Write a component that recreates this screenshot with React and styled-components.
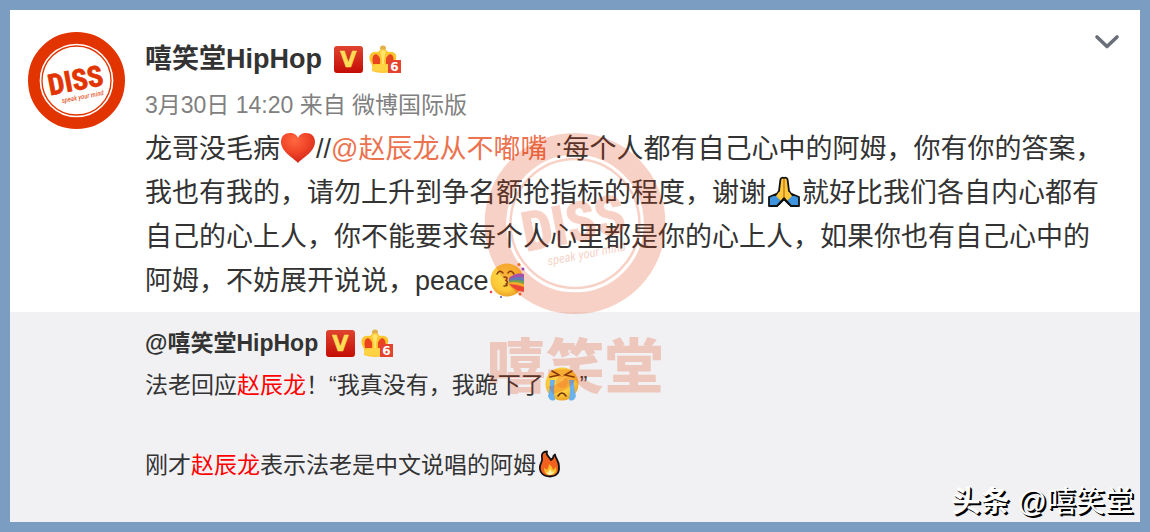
import styled, { createGlobalStyle } from "styled-components";

const COLOR = {
  FRAME: "#7b9dc2",
  CARD: "#ffffff",
  QUOTE: "#f1f1f3",
  TEXT: "#333333",
  SUB: "#808080",
  LINK: "#eb7350",
  HIGHLIGHT: "#ff0000",
  LOGO: "#e23400",
};

const App = () => {
  return (
    <>
      <GlobalStyle />
      <Card>
        <Post>
          <AvatarLink href="#profile" aria-label="嘻笑堂HipHop">
            <DissLogo filled />
          </AvatarLink>
          <Content>
            <PostHead>
              <Author href="#profile">嘻笑堂HipHop</Author>
              <VBadge />
              <CrownBadge />
            </PostHead>
            <Meta>
              <time>3月30日 14:20</time> 来自 微博国际版
            </Meta>
            <Body>
              龙哥没毛病
              <Heart />
              //<Mention href="#mention">@赵辰龙从不嘟嘴</Mention>{" "}
              :每个人都有自己心中的阿姆，你有你的答案，我也有我的，请勿上升到争名额抢指标的程度，谢谢
              <Pray />
              就好比我们各自内心都有自己的心上人，你不能要求每个人心里都是你的心上人，如果你也有自己心中的阿姆，不妨展开说说，peace
              <Rainbow />
            </Body>
          </Content>
          <MenuBtn aria-label="menu">
            <svg width="26" height="16" viewBox="0 0 26 16">
              <path
                d="M3 3 L13 12.5 L23 3"
                fill="none"
                stroke="#696e78"
                strokeWidth="3.6"
                strokeLinecap="round"
                strokeLinejoin="round"
              />
            </svg>
          </MenuBtn>
        </Post>
        <Quote>
          <QuoteHead>
            <Author href="#profile" $small>
              @嘻笑堂HipHop
            </Author>
            <VBadge />
            <CrownBadge />
          </QuoteHead>
          <QuoteText>
            法老回应<Mark>赵辰龙</Mark>！“我真没有，我跪下了
            <Cry />”
          </QuoteText>
          <QuoteText $gap>
            刚才<Mark>赵辰龙</Mark>表示法老是中文说唱的阿姆
            <Fire />
          </QuoteText>
        </Quote>
        <Watermark>
          <DissLogo />
          <WatermarkName>嘻笑堂</WatermarkName>
        </Watermark>
        <Source>
          <b>头条</b> @嘻笑堂
        </Source>
      </Card>
    </>
  );
};

const DissLogo = ({ filled }) => (
  <LogoSvg viewBox="0 0 100 100" aria-hidden="true">
    {filled && <circle cx="50" cy="50" r="48" fill="#fff" />}
    <circle cx="50" cy="50" r="44" fill="none" stroke={COLOR.LOGO} strokeWidth="12" />
    <circle cx="50" cy="50" r="35.6" fill="none" stroke={COLOR.LOGO} strokeWidth="1.4" />
    <g
      transform="rotate(-11 50 50)"
      fill={COLOR.LOGO}
      textAnchor="middle"
      fontFamily="'Roboto Condensed', Roboto, sans-serif"
      fontWeight="700"
    >
      <text x="49" y="60" fontSize="30" stroke={COLOR.LOGO} strokeWidth="0.6">
        DISS
      </text>
      <text x="53" y="70" fontSize="7" fontWeight="400" fontStyle="italic">
        speak your mind
      </text>
    </g>
  </LogoSvg>
);

const VBadge = () => (
  <svg width="29" height="27" viewBox="0 0 29 27" aria-hidden="true">
    <defs>
      <linearGradient id="vRed" x1="0" y1="0" x2="0" y2="1">
        <stop offset="0" stopColor="#df4430" />
        <stop offset="1" stopColor="#c40d05" />
      </linearGradient>
    </defs>
    <rect width="29" height="27" rx="3" fill="url(#vRed)" />
    <text
      x="14.5"
      y="21"
      textAnchor="middle"
      fontFamily="'DejaVu Sans', sans-serif"
      fontWeight="700"
      fontSize="21"
      fill="#ffdc55"
      stroke="#ffdc55"
      strokeWidth="0.6"
    >
      V
    </text>
  </svg>
);

const CrownBadge = () => (
  <svg width="32" height="29" viewBox="0 0 32 29" aria-hidden="true">
    <ellipse cx="14" cy="3" rx="3" ry="2.5" fill="#dfb04c" />
    <path
      d="M3 20 Q-1 14 1 10 Q3 6 9 7 Q11 4 14 4 Q17 4 19 7 Q25 6 27 10 Q28 14 25 20 V26 Q14 30 3 26 Z"
      fill="#ffc52e"
    />
    <path d="M4 19 Q2 10 7 9 Q12 11 11 19 Z M24 19 Q26 10 21 9 Q16 11 17 19 Z" fill="#e9431f" />
    <path d="M11 7 Q14 3 17 7 Q15 11 15 19 H13 Q13 11 11 7" fill="#ffe46b" />
    <path d="M3 21 Q14 17 25 21 V25 Q14 28 3 25 Z" fill="#ffd344" />
    <rect x="19" y="15" width="13" height="13" fill="#e4432f" />
    <text
      x="25.5"
      y="26"
      textAnchor="middle"
      fontFamily="'DejaVu Sans', sans-serif"
      fontWeight="700"
      fontSize="12"
      fill="#fff"
    >
      6
    </text>
  </svg>
);

const Heart = () => (
  <Emoji width="36" height="32" viewBox="0 0 36 32" role="img" aria-label="❤">
    <defs>
      <radialGradient id="heartRed" cx="0.4" cy="0.25" r="0.8">
        <stop offset="0" stopColor="#ff6740" />
        <stop offset="0.5" stopColor="#f04528" />
        <stop offset="1" stopColor="#cb2016" />
      </radialGradient>
    </defs>
    <path
      d="M18 31 C15 27 1 20 1 10 C1 4 5 1 10 1 C14 1 17 3 18 6 C19 3 22 1 26 1 C31 1 35 4 35 10 C35 20 21 27 18 31 Z"
      fill="url(#heartRed)"
    />
  </Emoji>
);

const Pray = () => (
  <Emoji width="36" height="32" viewBox="-1 0 36 32" role="img" aria-label="🙏">
    <g stroke="#111" strokeWidth="1.8" strokeLinejoin="round">
      <path
        d="M17 2 Q19 1 20.5 3 L22 15 L28 23 L22 28 L17 23 L12 28 L6 23 L12 15 L13.5 3 Q15 1 17 2 Z"
        fill="#ffc83d"
      />
      <path d="M9 18 L2 21 V30 H10 L15 25 Z" fill="#3f94e0" />
      <path d="M25 18 L32 21 V30 H24 L19 25 Z" fill="#3f94e0" />
      <path d="M12 16 L9 20 L14 25 L17 22 L20 25 L25 20 L22 16" fill="#ffc83d" stroke="none" />
      <path d="M17 3 V21" stroke="#b96d19" strokeWidth="1.2" />
      <path d="M10 30 L17 22 L24 30" fill="none" />
    </g>
  </Emoji>
);

const Face = () => (
  <>
    <defs>
      <radialGradient id="faceGold" cx="0.45" cy="0.4" r="0.6">
        <stop offset="0" stopColor="#ffdc52" />
        <stop offset="0.7" stopColor="#fcc838" />
        <stop offset="1" stopColor="#eca428" />
      </radialGradient>
    </defs>
    <circle cx="18" cy="18" r="16.5" fill="url(#faceGold)" />
  </>
);

const Rainbow = () => (
  <Emoji width="36" height="36" viewBox="0 0 36 36" role="img" aria-label="🥳">
    <Face />
    <g fill="none" stroke="#7a3c10" strokeWidth="1.5" strokeLinecap="round">
      <path d="M8 12 Q10.5 7 14 11 M19 11 Q22 7 25 12" />
      <path d="M15 15 Q20 15 17 18.5 Q20 20 17 22 Q20 24 15 24" />
    </g>
    <path d="M20 16 Q27 10 35 12 V16 Q27 15 20 18 Z" fill="#9657dd" />
    <path d="M20 17.5 Q27 14 35 15.5 V19.5 Q27 18 20 20 Z" fill="#438fea" />
    <path d="M20 19 Q27 17 35 19 V22.5 Q27 20 20 21 Z" fill="#4fbd6e" />
    <path d="M20 20.5 Q27 19 35 22 V25.5 Q27 23 20 22 Z" fill="#f8cf36" />
    <path d="M20 22 Q27 22 35 25 V30 Q26 29 20 22 Z" fill="#ee4b42" />
    <g fill="#ef722d">
      <circle cx="30" cy="2.5" r="1.6" />
      <circle cx="31" cy="32" r="1.5" />
    </g>
    <circle cx="34" cy="7" r="1.5" fill="#8848d5" />
    <circle cx="2" cy="30" r="1.3" fill="#ef464c" />
    <circle cx="12" cy="35" r="1" fill="#4254b5" />
  </Emoji>
);

const Cry = () => (
  <Emoji width="36" height="36" viewBox="0 0 36 36" role="img" aria-label="😭">
    <Face />
    <circle cx="18" cy="16" r="6" fill="#f4883c" opacity="0.4" />
    <path d="M6 14 H11 Q9 24 11 34 Q6 36 4 30 Q6 24 6 14 Z" fill="#69b2ee" />
    <path d="M30 14 H25 Q27 24 25 34 Q30 36 32 30 Q30 24 30 14 Z" fill="#69b2ee" />
    <g fill="none" stroke="#6d3510" strokeWidth="1.6" strokeLinecap="round">
      <path d="M8 5 L15 9 L6 11 M28 5 L21 9 L30 11" />
      <path d="M14 30 Q18 24 22 30" />
    </g>
  </Emoji>
);

const Fire = () => (
  <Emoji width="26" height="28" viewBox="-2 0 26 28" role="img" aria-label="🔥">
    <path
      d="M12 26.5 C5 26.5 1 22 2 16 C2.5 13 5 11 4 8 C3 4 5 1.5 9 1.5 C7 5 11 6 13 10 L15 8 C15 6 16 5 17 4.5 C17 8 21 10 21 17 C21.5 23 18 26.5 12 26.5 Z"
      fill="#f4611e"
      stroke="#111"
      strokeWidth="1.8"
      strokeLinejoin="round"
    />
    <path d="M6 18 Q8 19 9 20 Q11 17 11 14 Q14 16 15 20 L18 17 Q20 25 12 25 Q6 25 6 18 Z" fill="#ffbd2e" />
    <path d="M8 22 L10 23 L12 19 L14 22 L16 21 Q15 25 12 25 Q9 25 8 22 Z" fill="#fff2a6" />
  </Emoji>
);

const GlobalStyle = createGlobalStyle`
  * {
    box-sizing: border-box;
  }
  body {
    margin: 0;
    background: ${COLOR.FRAME};
    color: ${COLOR.TEXT};
    font-family: "Liberation Sans", "Noto Sans CJK SC", sans-serif;
  }
  #root {
    display: flex;
    min-height: 100vh;
    padding: 10px;
  }
  a {
    text-decoration: none;
  }
`;

const Card = styled.main`
  position: relative;
  display: flex;
  flex-direction: column;
  flex: 1;
  background: ${COLOR.CARD};
`;

const Post = styled.article`
  display: flex;
  align-items: flex-start;
  padding: 22px 18px 8px;
`;

const AvatarLink = styled.a`
  flex: none;
  width: 97px;
  height: 97px;
  margin-right: 20px;
`;

const LogoSvg = styled.svg`
  display: block;
  width: 100%;
`;

const Content = styled.div`
  flex: 1;
  min-width: 0;
`;

const PostHead = styled.header`
  display: flex;
  align-items: center;
  gap: 6px;
  height: 54px;
`;

const QuoteHead = styled(PostHead)`
  height: 34px;
`;

const Author = styled.a`
  margin-right: ${(props) => (props.$small ? "2px" : "6px")};
  color: ${COLOR.TEXT};
  font-size: ${(props) => (props.$small ? "23px" : "27px")};
  font-weight: 700;
  line-height: 1;
`;

const Meta = styled.div`
  height: 41px;
  color: ${COLOR.SUB};
  font-size: 23px;
  line-height: 38px;
`;

const Body = styled.p`
  margin: 0;
  font-size: 27px;
  line-height: 44px;
`;

const Mention = styled.a`
  color: ${COLOR.LINK};
`;

const Emoji = styled.svg`
  margin-bottom: 6px;
  vertical-align: middle;
`;

const MenuBtn = styled.button`
  display: flex;
  width: 28px;
  height: 20px;
  margin-left: -20px;
  padding: 2px 0 0;
  border: 0;
  background: none;
`;

const Quote = styled.section`
  flex: 1;
  padding: 15px 18px 36px 135px;
  background: ${COLOR.QUOTE};
`;

const QuoteText = styled.p`
  margin: ${(props) => (props.$gap ? "40px 0 0" : "4px 0 0")};
  height: 40px;
  font-size: 23px;
  line-height: 40px;
`;

const Mark = styled.span`
  color: ${COLOR.HIGHLIGHT};
`;

const Watermark = styled.div`
  position: absolute;
  top: 123px;
  left: 50%;
  width: 181px;
  transform: translateX(-50%);
  opacity: 0.22;
  pointer-events: none;
`;

const WatermarkName = styled.div`
  display: flex;
  justify-content: center;
  margin-top: 14px;
  color: ${COLOR.LOGO};
  font-size: 59px;
  font-weight: 900;
  line-height: 80px;
`;

const Source = styled.div`
  position: absolute;
  right: 6px;
  bottom: 0;
  color: #fff;
  font-size: 29px;
  line-height: 40px;
  text-shadow:
    1px 1px 0 #000,
    2px 2px 0 #000;
`;

export default App;
